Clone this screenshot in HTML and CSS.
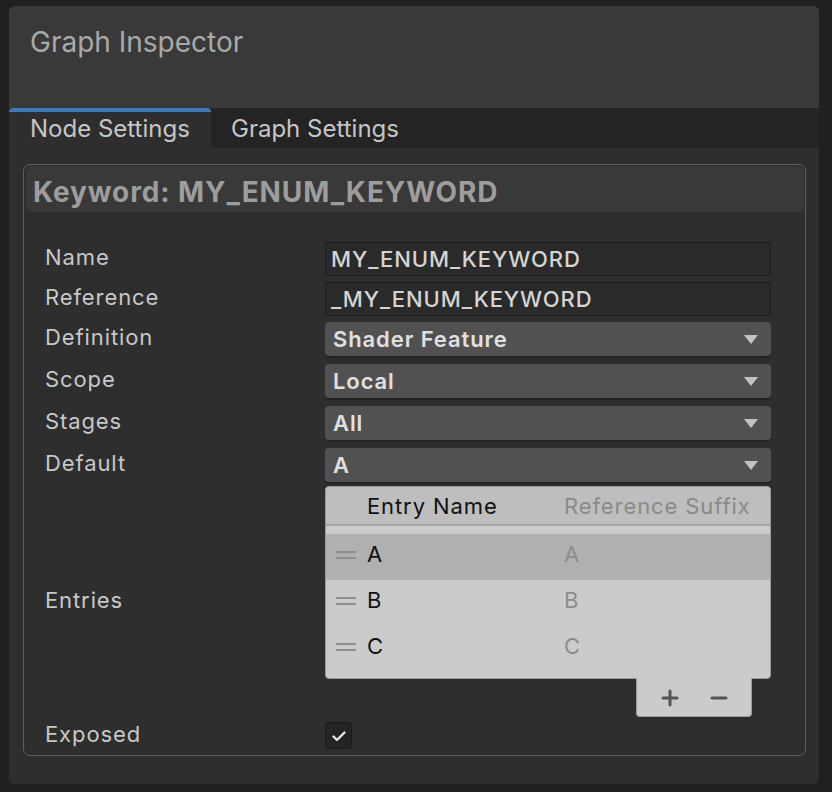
FILE: index.html
```html
<!DOCTYPE html>
<html>
<head>
<meta charset="utf-8">
<link rel="stylesheet" href="styles.css">
</head>
<body>
<div class="panel">
  <div class="header"><div class="title">Graph Inspector</div></div>
  <div class="tabs">
    <div class="tab active">Node Settings</div>
    <div class="tab">Graph Settings</div>
  </div>
  <div class="content">
    <div class="box">
      <div class="box-header">Keyword: MY_ENUM_KEYWORD</div>
      <div class="props">
        <div class="label">Name</div>
        <div class="field text">MY_ENUM_KEYWORD</div>

        <div class="label">Reference</div>
        <div class="field text">_MY_ENUM_KEYWORD</div>

        <div class="label">Definition</div>
        <div class="field drop">Shader Feature<span class="arrow"></span></div>

        <div class="label">Scope</div>
        <div class="field drop">Local<span class="arrow"></span></div>

        <div class="label">Stages</div>
        <div class="field drop">All<span class="arrow"></span></div>

        <div class="label">Default</div>
        <div class="field drop">A<span class="arrow"></span></div>

        <div class="label entries-label">Entries</div>
        <div class="entries">
          <div class="list">
            <div class="list-head">
              <span class="c1">Entry Name</span>
              <span class="c2">Reference Suffix</span>
            </div>
            <div class="strip"></div>
            <div class="row selected"><span class="handle"></span><span class="c1">A</span><span class="c2">A</span></div>
            <div class="row"><span class="handle"></span><span class="c1">B</span><span class="c2">B</span></div>
            <div class="row"><span class="handle"></span><span class="c1">C</span><span class="c2">C</span></div>
          </div>
          <div class="footer">
            <svg class="btn" width="20" height="20" viewBox="0 0 20 20"><path d="M10 3v14M3 10h14" stroke="#555" stroke-width="3" stroke-linecap="round"/></svg>
            <svg class="btn" width="20" height="20" viewBox="0 0 20 20"><path d="M3 10h14" stroke="#555" stroke-width="3" stroke-linecap="round"/></svg>
          </div>
        </div>

        <div class="label exposed-label">Exposed</div>
        <div class="check-wrap">
          <div class="checkbox">
            <svg width="18" height="18" viewBox="0 0 18 18"><path d="M3.5 9.5l3.5 3.5L14.5 5.5" fill="none" stroke="#e6e6e6" stroke-width="2.4" stroke-linecap="round" stroke-linejoin="round"/></svg>
          </div>
        </div>
      </div>
    </div>
  </div>
</div>
</body>
</html>
```

FILE: styles.css
```css
* { box-sizing: border-box; }
html, body { margin: 0; padding: 0; }
body {
  background: #202020;
  font-family: Inter, "Noto Sans", sans-serif;
  width: 832px;
  height: 792px;
  overflow: hidden;
  padding: 6px 13px 8px 9px;
}
.panel {
  width: 810px;
  height: 778px;
  border-radius: 6px;
  background: #2e2e2e;
  overflow: hidden;
}
.header {
  height: 102px;
  background: #393939;
  padding: 19px 0 0 21px;
}
.title {
  font-size: 28px;
  line-height: 34px;
  color: #a9a9a9;
}
.tabs {
  height: 40px;
  background: #242424;
  display: flex;
}
.tab {
  font-size: 24px;
  line-height: 41px;
  height: 40px;
  color: #c6c6c6;
  padding-left: 20px;
}
.tab.active {
  width: 202px;
  padding-left: 21px;
  background: #2e2e2e;
  border-top: 4px solid #3d7bc1;
  border-radius: 4px 4px 0 0;
  line-height: 33px;
}
.content {
  padding: 16px 13px 0 14px;
}
.box {
  height: 592px;
  border: 1px solid #5f5f5f;
  border-radius: 7px;
  padding: 1px 1px 0 2px;
}
.box-header {
  height: 46px;
  background: #393939;
  border-radius: 6px;
  padding: 6px 0 0 7px;
  font-size: 28px;
  font-weight: 650;
  letter-spacing: 0.9px;
  line-height: 40px;
  color: #9d9d9d;
}
.props {
  display: grid;
  grid-template-columns: 280px 446px;
  padding: 30px 0 0 19px;
  row-gap: 6px;
  letter-spacing: 0.9px;
}
.label {
  font-size: 22px;
  color: #c8c8c8;
  line-height: 30px;
  height: 34px;
}
.field {
  height: 34px;
  border-radius: 4px;
  font-size: 22px;
  line-height: 32px;
  color: #d4d4d4;
  position: relative;
}
.field.text {
  background: #2a2a2a;
  border: 1px solid #1c1c1c;
  border-top-color: #161616;
  padding-left: 5px;
  font-weight: 500;
}
.field.drop {
  background: #515151;
  box-shadow: 0 2px 0 #232323;
  padding-left: 8px;
  font-weight: 600;
  line-height: 34px;
  color: #e0e0e0;
  margin-bottom: 2px;
}
.arrow {
  position: absolute;
  right: 13px;
  top: 13px;
  width: 0;
  height: 0;
  border-left: 7px solid transparent;
  border-right: 7px solid transparent;
  border-top: 9px solid #c2c2c2;
}
.entries-label {
  align-self: center;
  height: auto;
  line-height: 30px;
  padding-bottom: 7px;
}
.entries {
  margin-top: -4px;
}
.list {
  border: 1px solid #9a9a9a;
  border-radius: 4px;
  background: #cbcbcb;
  padding-bottom: 6px;
  position: relative;
  z-index: 0;
}
.list-head {
  height: 39px;
  background: #bebebe;
  border-bottom: 2px solid #a4a4a4;
  border-radius: 3px 3px 0 0;
  display: flex;
  align-items: center;
  font-size: 22px;
  position: relative;
}
.strip { height: 8px; }
.row {
  height: 46px;
  display: flex;
  align-items: center;
  font-size: 22px;
  position: relative;
  padding-bottom: 7px;
}
.row.selected { background: #b0b0b0; }
.c1 {
  position: absolute;
  left: 41px;
  color: #111;
}
.c2 {
  position: absolute;
  left: 238px;
  color: #8c8c8c;
}
.list-head .c2 { color: #8a8a8a; }
.handle {
  position: absolute;
  left: 10px;
  top: 50%;
  margin-top: -6px;
  width: 20px;
  height: 8px;
  border-top: 2px solid #8e8e8e;
  border-bottom: 2px solid #8e8e8e;
}
.footer {
  margin: -1px 0 0 311px;
  width: 116px;
  height: 39px;
  background: #cbcbcb;
  border: 1px solid #9a9a9a;
  border-top: none;
  border-radius: 0 0 4px 4px;
  display: flex;
  align-items: center;
  justify-content: center;
  gap: 29px;
  position: relative;
  z-index: 1;
  padding-top: 2px;
}
.exposed-label {
  height: 27px;
  line-height: 25px;
  margin-top: -1px;
}
.check-wrap {
  height: 27px;
  margin-top: -1px;
}
.checkbox {
  width: 27px;
  height: 27px;
  background: #242424;
  border: 1px solid #1a1a1a;
  border-radius: 3px;
  display: flex;
  align-items: center;
  justify-content: center;
}
```
